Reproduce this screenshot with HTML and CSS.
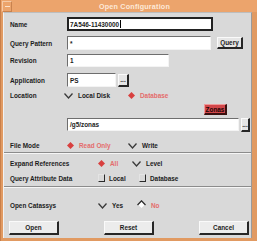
FILE: index.html
```html
<!DOCTYPE html>
<html>
<head>
<meta charset="utf-8">
<link rel="stylesheet" href="styles.css">
</head>
<body>
<div class="win">
  <div class="titlebar">
    <div class="tb-btn"><span class="tb-dash"></span></div>
    <div class="title">Open Configuration</div>
  </div>
  <div class="panel">
    <div class="row r-name">
      <span class="lbl">Name</span>
      <div class="field f-name focus">7A546-11430000<span class="caret"></span></div>
    </div>
    <div class="row r-query">
      <span class="lbl">Query Pattern</span>
      <div class="field f-query">*</div>
      <button class="btn btn-query">Query</button>
    </div>
    <div class="row r-rev">
      <span class="lbl">Revision</span>
      <div class="field f-rev">1</div>
    </div>
    <div class="row r-app">
      <span class="lbl">Application</span>
      <div class="field f-app">PS</div>
      <button class="btn btn-dots">...</button>
    </div>
    <div class="row r-loc">
      <span class="lbl">Location</span>
      <div class="opts opts-loc">
        <span class="opt w-loc"><svg class="ind v" viewBox="0 0 9 6"><polyline points="0.5,0.5 4.5,5 8.5,0.5"/></svg>Local Disk</span>
        <span class="opt on"><svg class="ind dia" viewBox="0 0 7 7"><polygon points="3.5,0 7,3.5 3.5,7 0,3.5"/></svg>Database</span>
      </div>
    </div>
    <div class="row r-zonas">
      <button class="btn btn-zonas">Zonas</button>
    </div>
    <div class="row r-path">
      <span class="lbl"></span>
      <div class="field f-path">/g5/zonas</div>
      <button class="btn btn-dots2">...</button>
    </div>
    <div class="row r-mode">
      <span class="lbl">File Mode</span>
      <div class="opts opts-mode">
        <span class="opt on w-mode"><svg class="ind dia" viewBox="0 0 7 7"><polygon points="3.5,0 7,3.5 3.5,7 0,3.5"/></svg>Read Only</span>
        <span class="opt"><svg class="ind v" viewBox="0 0 9 6"><polyline points="0.5,0.5 4.5,5 8.5,0.5"/></svg>Write</span>
      </div>
    </div>
    <div class="sep"></div>
    <div class="row r-exp">
      <span class="lbl lbl-wide">Expand References</span>
      <div class="opts">
        <span class="opt on w-exp"><svg class="ind dia" viewBox="0 0 7 7"><polygon points="3.5,0 7,3.5 3.5,7 0,3.5"/></svg>All</span>
        <span class="opt"><svg class="ind v" viewBox="0 0 9 6"><polyline points="0.5,0.5 4.5,5 8.5,0.5"/></svg>Level</span>
      </div>
    </div>
    <div class="row r-qad">
      <span class="lbl lbl-wide">Query Attribute Data</span>
      <div class="opts">
        <span class="opt w-qad"><span class="cb"></span>Local</span>
        <span class="opt"><span class="cb"></span>Database</span>
      </div>
    </div>
    <div class="sep sep2"></div>
    <div class="row r-cat">
      <span class="lbl lbl-wide">Open Catassys</span>
      <div class="opts">
        <span class="opt w-cat"><svg class="ind v" viewBox="0 0 9 6"><polyline points="0.5,0.5 4.5,5 8.5,0.5"/></svg>Yes</span>
        <span class="opt on"><svg class="ind up" viewBox="0 0 9 8"><polygon class="wd" points="4.5,2 7.5,5 4.5,8 1.5,5"/><polyline points="0.5,5 4.5,0.8 8.5,5"/></svg>No</span>
      </div>
    </div>
    <div class="btnrow">
      <button class="btn big">Open</button>
      <button class="btn big">Reset</button>
      <button class="btn big">Cancel</button>
    </div>
  </div>
</div>
</body>
</html>
```
FILE: styles.css
```css
html, body {
  margin: 0;
  padding: 0;
  background: #e39c64;
}
body {
  font-family: "Liberation Sans", Arial, sans-serif;
  font-weight: bold;
  font-size: 6.4px;
  color: #1c1c1c;
}
.win {
  width: 257px;
  height: 241px;
  background: #e19a62;
  border-left: 1px solid #c97f4a;
  box-sizing: border-box;
  display: flex;
  flex-direction: column;
}
.titlebar {
  height: 12px;
  display: flex;
  align-items: center;
  background: #eca46c;
}
.tb-btn {
  width: 8px;
  height: 9px;
  margin-left: 1px;
  border: 1px solid #f6caa6;
  border-right-color: #c8824e;
  border-bottom-color: #c8824e;
  display: flex;
  align-items: center;
  justify-content: center;
}
.tb-dash {
  width: 5px;
  height: 1px;
  background: #fbe2cc;
}
.title {
  flex: 1;
  text-align: center;
  color: #fde9d8;
  font-size: 7.2px;
  letter-spacing: 0.2px;
}
.panel {
  flex: 1;
  margin: 0 5px 3px 2px;
  background: #d9d9d9;
  border-left: 1px solid #f2f2f2;
  border-top: 1px solid #bdbdbd;
  border-right: 1px solid #9a9a9a;
  padding: 4px 0 3px 0;
  display: flex;
  flex-direction: column;
}
.row {
  display: flex;
  align-items: center;
  padding-left: 6px;
}
.lbl {
  width: 57px;
  flex: none;
}
.lbl-wide {
  width: 88px;
}
.field {
  background: #ffffff;
  border: 1px solid #f4f4f4;
  border-top-color: #6e6e6e;
  border-left-color: #6e6e6e;
  box-sizing: border-box;
  padding-left: 2px;
  display: flex;
  align-items: center;
  height: 100%;
}
.field.focus {
  border: 2px solid #222;
  padding-left: 1px;
}
.caret {
  width: 1px;
  height: 8px;
  background: #000;
  margin-left: 0.5px;
}
.r-name { height: 14px; }
.f-name { width: 146px; }
.r-query { height: 14px; margin-top: 5px; }
.f-query { width: 144px; }
.r-rev { height: 13px; margin-top: 4px; }
.f-rev { width: 102px; }
.r-app { height: 14px; margin-top: 6px; }
.f-app { width: 49px; }
.r-loc { height: 12px; margin-top: 2px; }
.r-zonas { height: 11px; margin-top: 3px; }
.r-path { height: 13px; margin-top: 3px; }
.f-path { width: 172px; }
.r-mode { height: 12px; margin-top: 8px; }
.r-exp { height: 12px; margin-top: 3px; }
.r-qad { height: 12px; margin-top: 3px; }
.r-cat { height: 12px; margin-top: 11px; }

.btn {
  font-family: inherit;
  font-weight: bold;
  font-size: 6.4px;
  color: #1c1c1c;
  background: #e6e6e6;
  border: 1px solid #fafafa;
  border-right: 2px solid #262626;
  border-bottom: 2px solid #262626;
  padding: 0;
  margin: 0;
  box-sizing: border-box;
  display: flex;
  align-items: center;
  justify-content: center;
}
.btn-query {
  width: 26px;
  height: 12px;
  margin-left: 6px;
}
.btn-dots {
  width: 11px;
  height: 13px;
  margin-left: 2px;
  align-items: flex-end;
  padding-bottom: 2px;
}
.btn-dots2 {
  width: 9px;
  height: 14px;
  margin-left: 2px;
  align-items: flex-end;
  padding-bottom: 2px;
}
.btn-zonas {
  width: 23px;
  height: 11px;
  margin-left: 194px;
  background: #d2474a;
  border-color: #ef9a9a;
  border-right-color: #3a1010;
  border-bottom-color: #3a1010;
  color: #1a0505;
}
.opts {
  display: flex;
  align-items: center;
}
.opts-loc { margin-left: -3px; }
.opt {
  display: flex;
  align-items: center;
  white-space: nowrap;
}
.opt.on { color: #e46c6c; }
.w-loc { width: 64px; }
.w-mode { width: 61px; }
.w-exp { width: 34px; }
.w-qad { width: 41px; }
.w-cat { width: 39px; }
.ind {
  flex: none;
  margin-right: 5px;
}
.ind.v {
  width: 9px;
  height: 6px;
  fill: none;
  stroke: #3a3a3a;
  stroke-width: 1.3;
  margin-top: 2px;
}
.ind.dia {
  width: 7px;
  height: 7px;
  fill: #d8403f;
}
.ind.up {
  width: 9px;
  height: 8px;
  fill: none;
  stroke: #2a2a2a;
  stroke-width: 1.2;
  margin-top: -2px;
}
.ind.up .wd {
  fill: #ffffff;
  stroke: none;
}
.cb {
  width: 5px;
  height: 6px;
  border-right: 1px solid #2a2a2a;
  border-bottom: 1px solid #2a2a2a;
  border-top: 1px solid #e4e4e4;
  border-left: 1px solid #e4e4e4;
  margin-right: 4px;
  flex: none;
}
.sep {
  height: 1px;
  background: #8c8c8c;
  border-bottom: 1px solid #f6f6f6;
  margin-top: 1px;
}
.sep2 { margin-top: 2px; }
.btnrow {
  height: 14px;
  margin-top: 10px;
  display: flex;
  justify-content: space-between;
  padding: 0 2px 0 5px;
}
.btn.big {
  width: 50px;
  height: 14px;
  background: #ececec;
}
```
